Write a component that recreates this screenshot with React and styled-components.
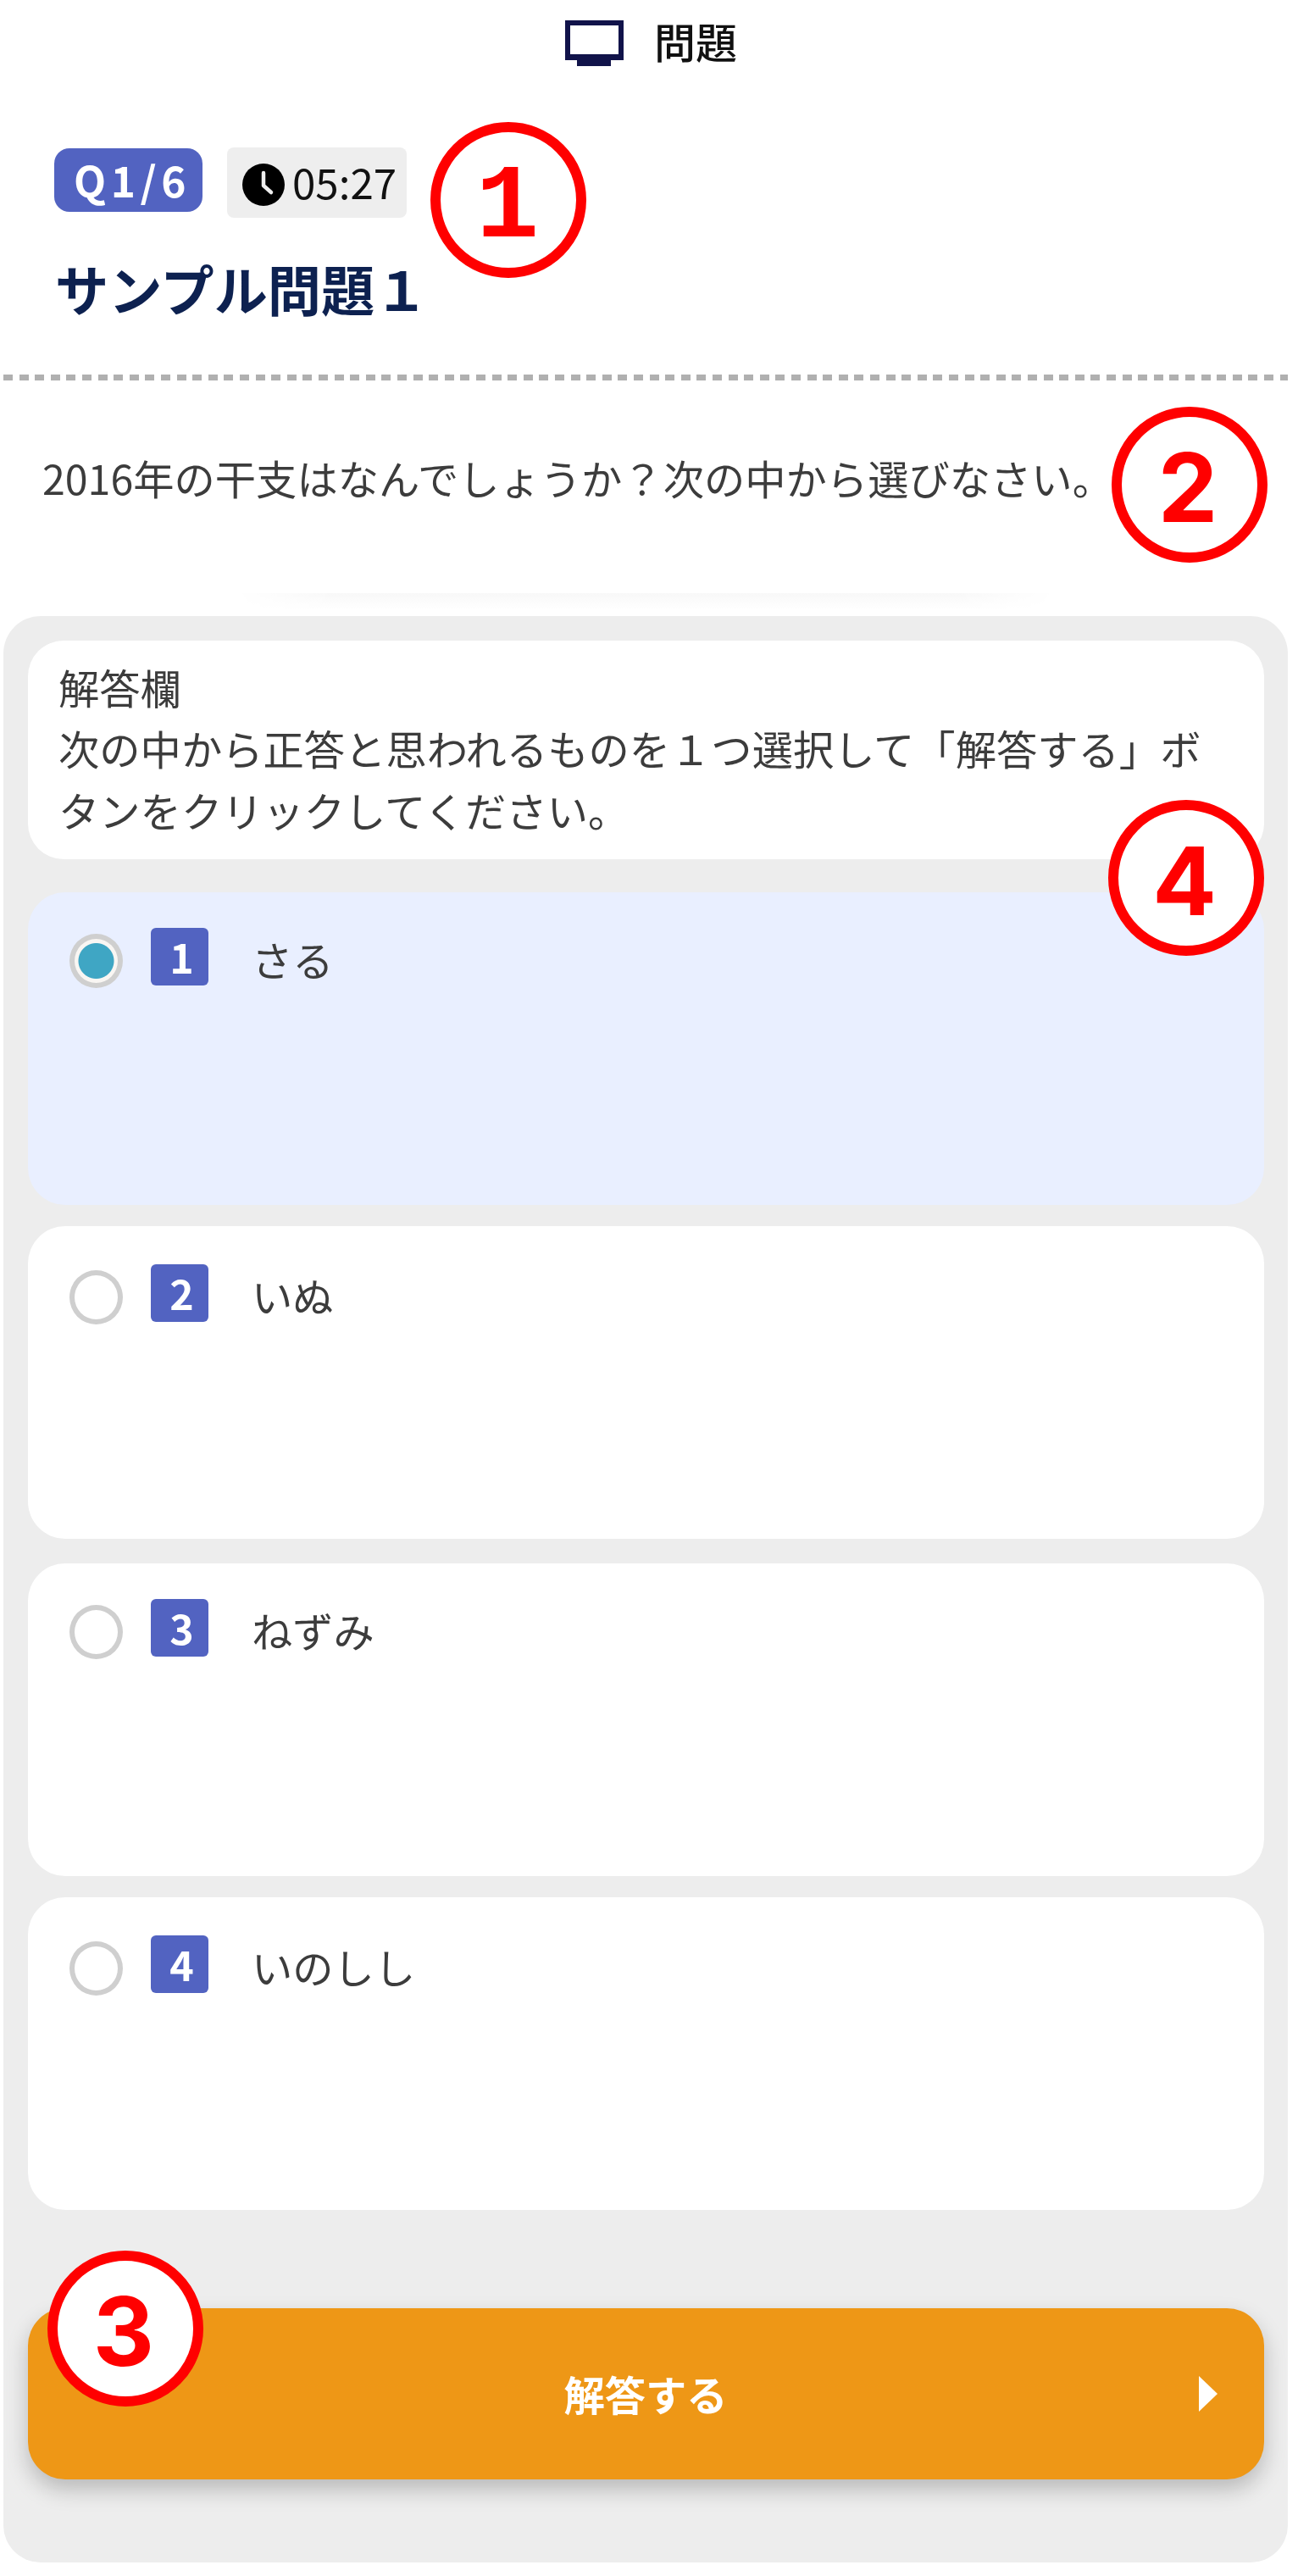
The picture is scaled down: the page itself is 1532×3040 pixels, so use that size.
import React, { useState } from 'react';
import styled, { createGlobalStyle } from 'styled-components';

const GlobalStyle = createGlobalStyle`
  * {
    box-sizing: border-box;
  }

  body {
    margin: 0;
    background: #fff;
    color: #3c3c3c;
    font-family: 'Noto Sans CJK JP', sans-serif;
    font-size: 48.3px;
    line-height: 72px;
  }
`;

const Page = styled.main`
  position: relative;
  width: 1532px;
  height: 3040px;
  padding: 0 12px 0 4px;
  overflow: hidden;
`;

const TopBar = styled.header`
  display: flex;
  align-items: flex-start;
  height: 102px;
  padding: 24px 0 0 663px;
  gap: 36px;
  font-size: 49px;
  font-weight: 500;
  line-height: 47px;
  color: #111;
`;

const QuizHead = styled.section`
  height: 340px;
  padding: 72px 0 0 60px;
`;

const Meta = styled.div`
  display: flex;
  align-items: flex-start;
  gap: 29px;
`;

const Counter = styled.span`
  width: 175px;
  height: 75px;
  margin-top: 1px;
  padding-left: 23px;
  border-radius: 18px;
  background: #5263c1;
  color: #fff;
  font-size: 49.5px;
  font-weight: 700;
  letter-spacing: 5.6px;
  line-height: 74px;
`;

const Timer = styled.span`
  display: flex;
  align-items: center;
  gap: 9px;
  width: 212px;
  height: 83px;
  padding-left: 18px;
  border-radius: 8px;
  background: #eee;
  color: #111;
  font-size: 49.3px;
  line-height: 72px;

  svg {
    margin-top: 4px;
  }
`;

const Time = styled.span`
  height: 76px;
`;

const Title = styled.h1`
  margin: 38px 0 0 1px;
  color: #0d2150;
  font-size: 63.2px;
  font-weight: 700;
  line-height: 90px;
`;

const Divider = styled.div`
  height: 7px;
  background: repeating-linear-gradient(90deg, #b0b0b0 0 11px, transparent 11px 18.6px);
`;

const Question = styled.p`
  height: 251px;
  margin: 0;
  padding: 78px 0 0 46px;
`;

const Fade = styled.div`
  width: 968px;
  height: 20px;
  margin: 0 auto 7px;
  background: linear-gradient(#f8f8f8, #fff);
  mask-image: linear-gradient(90deg, transparent, #000 12%, #000 88%, transparent);
`;

const AnswerPanel = styled.section`
  width: 1516px;
  height: 2297px;
  padding: 29px 28px 0 29px;
  border-radius: 44px;
  background: #ededed;
`;

const Guide = styled.div`
  height: 258px;
  margin-bottom: 39px;
  padding: 18px 35px 0 36px;
  border-radius: 42px;
  background: #fff;
  line-height: 72.4px;
`;

const Choice = styled.label`
  display: flex;
  align-items: flex-start;
  height: 369px;
  margin-bottom: ${({ $space }) => $space}px;
  padding: ${({ $top }) => $top}px 0 0 49px;
  border-radius: 44px;
  background: ${({ $checked }) => ($checked ? '#e9efff' : '#fff')};
`;

const Radio = styled.input`
  appearance: none;
  flex: none;
  width: 63px;
  height: 64px;
  margin: 7px 33px 0 0;
  border: 6px solid #cfcfcf;
  border-radius: 50%;
  background: #fff;

  &:checked {
    background: radial-gradient(circle, #3fa6c4 20.5px, #f9f6f3 21.5px);
  }
`;

const Num = styled.span`
  flex: none;
  width: 68px;
  height: 68px;
  margin-right: 51px;
  padding-left: 5px;
  border-radius: 6px;
  background: #5263c1;
  color: #fff;
  font-weight: 700;
  line-height: 66px;
  text-align: center;
`;

const ChoiceText = styled.span`
  line-height: 72px;
`;

const Submit = styled.button`
  display: grid;
  grid-template-columns: 1fr auto 1fr;
  align-items: center;
  width: 1459px;
  height: 202px;
  margin-top: 116px;
  padding: 0 55px 0 54px;
  border: 0;
  border-radius: 44px;
  background: #ee9716;
  box-shadow: 0 12px 26px rgba(0, 0, 0, 0.22);
  color: #fff;
  font: inherit;
  font-weight: 700;

  span {
    grid-column: 2;
    padding-bottom: 3px;
  }

  svg {
    justify-self: end;
  }
`;

// numbered callout lying over the screen
const Marker = styled.div`
  position: absolute;
  top: ${({ $y }) => $y}px;
  left: ${({ $x }) => $x}px;
  width: 184px;
  height: 184px;
  padding-right: 4px;
  border: 12px solid #f00;
  border-radius: 50%;
  background: #fff;
  color: #f00;
  font-family: 'Inter', sans-serif;
  font-size: 112px;
  font-weight: 700;
  line-height: 166px;
  text-align: center;
`;

// the "1" is set in a face that has a foot serif
const FootedMarker = styled(Marker)`
  padding-right: 2px;
  font-family: 'Liberation Mono', monospace;
  font-size: 124px;
  line-height: 181px;
`;

const MonitorIcon = () => (
  <svg width="69" height="54" viewBox="0 0 69 54" fill="#11134a">
    <path fillRule="evenodd" d="M0 0h69v47H54v7H14v-7H0zM6 6v34h57V6z" />
  </svg>
);

const ClockIcon = () => (
  <svg width="50" height="50" viewBox="0 0 50 50">
    <circle cx="25" cy="25" r="25" fill="#000" />
    <path d="M25 11v15l9 8" fill="none" stroke="#eee" strokeWidth="4.5" strokeLinecap="round" strokeLinejoin="round" />
  </svg>
);

const choices = [
  { id: 1, text: 'さる', top: 42, space: 25 },
  { id: 2, text: 'いぬ', top: 45, space: 29 },
  { id: 3, text: 'ねずみ', top: 42, space: 25 },
  { id: 4, text: 'いのしし', top: 45, space: 0 },
];

const markers = [
  { id: 2, x: 1312, y: 480 },
  { id: 3, x: 56, y: 2656 },
  { id: 4, x: 1308, y: 944 },
];

const App = () => {
  const [selected, setSelected] = useState(1);

  return (
    <Page>
      <GlobalStyle />
      <TopBar>
        <MonitorIcon />
        <span>問題</span>
      </TopBar>
      <QuizHead>
        <Meta>
          <Counter>Q1/6</Counter>
          <Timer>
            <ClockIcon />
            <Time>05:27</Time>
          </Timer>
        </Meta>
        <Title>サンプル問題１</Title>
      </QuizHead>
      <Divider />
      <Question>2016年の干支はなんでしょうか？次の中から選びなさい。</Question>
      <Fade />
      <AnswerPanel>
        <Guide>
          <div>解答欄</div>
          <div>次の中から正答と思われるものを１つ選択して「解答する」ボタンをクリックしてください。</div>
        </Guide>
        {choices.map((choice) => (
          <Choice
            key={choice.id}
            $checked={selected === choice.id}
            $top={choice.top}
            $space={choice.space}
          >
            <Radio
              type="radio"
              name="answer"
              checked={selected === choice.id}
              onChange={() => setSelected(choice.id)}
            />
            <Num>{choice.id}</Num>
            <ChoiceText>{choice.text}</ChoiceText>
          </Choice>
        ))}
        <Submit type="button">
          <span>解答する</span>
          <svg width="22" height="42" viewBox="0 0 22 42" fill="#fff">
            <path d="M0 0l22 21L0 42z" />
          </svg>
        </Submit>
      </AnswerPanel>
      <FootedMarker $x={508} $y={144}>1</FootedMarker>
      {markers.map((marker) => (
        <Marker key={marker.id} $x={marker.x} $y={marker.y}>
          {marker.id}
        </Marker>
      ))}
    </Page>
  );
};

export default App;
